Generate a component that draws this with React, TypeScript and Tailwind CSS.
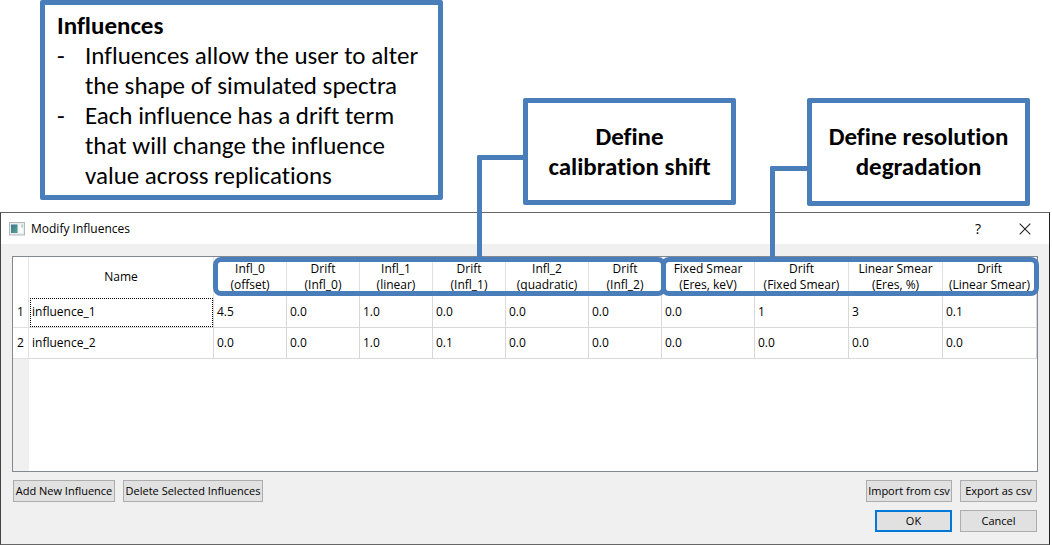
import React from "react";

type Column = { title: string; unit: string; width: string };

const columns: Column[] = [
  { title: "Infl_0", unit: "(offset)", width: "w-[73px]" },
  { title: "Drift", unit: "(Infl_0)", width: "w-[73px]" },
  { title: "Infl_1", unit: "(linear)", width: "w-[73px]" },
  { title: "Drift", unit: "(Infl_1)", width: "w-[73px]" },
  { title: "Infl_2", unit: "(quadratic)", width: "w-[83px]" },
  { title: "Drift", unit: "(Infl_2)", width: "w-[73px]" },
  { title: "Fixed Smear", unit: "(Eres, keV)", width: "w-[93px]" },
  { title: "Drift", unit: "(Fixed Smear)", width: "w-[94px]" },
  { title: "Linear Smear", unit: "(Eres, %)", width: "w-[94px]" },
  { title: "Drift", unit: "(Linear Smear)", width: "w-[94px]" },
];

const rows = [
  { name: "influence_1", values: ["4.5", "0.0", "1.0", "0.0", "0.0", "0.0", "0.0", "1", "3", "0.1"] },
  { name: "influence_2", values: ["0.0", "0.0", "1.0", "0.1", "0.0", "0.0", "0.0", "0.0", "0.0", "0.0"] },
];

const notes = [
  ["Influences allow the user to alter", "the shape of simulated spectra"],
  ["Each influence has a drift term", "that will change the influence", "value across replications"],
];

function DialogButton({ children, className = "", primary = false }: { children: React.ReactNode; className?: string; primary?: boolean }) {
  return (
    <button
      type="button"
      className={`flex h-[22px] items-center justify-center whitespace-nowrap bg-[#e1e1e1] text-[11px] leading-4 ${
        primary ? "border-2 border-[#0078d7]" : "border border-[#adadad]"
      } ${className}`}
    >
      {children}
    </button>
  );
}

function Callouts() {
  return (
    <div className="flex h-[212px] items-start pl-10 pr-[22px] font-['Carlito','Lato',sans-serif] text-[25px] leading-[30px] [font-variant-ligatures:none]">
      <section className="h-[200px] w-[403px] shrink-0 rounded-xs border-5 border-[#4a7ebb] bg-white pl-3 pt-1.5">
        <h2 className="font-bold">Influences</h2>
        <ul>
          {notes.map((lines) => (
            <li key={lines[0]} className="flex">
              <span className="w-7 shrink-0">-</span>
              <span className="whitespace-nowrap">
                {lines.map((line) => (
                  <span key={line} className="block">
                    {line}
                  </span>
                ))}
              </span>
            </li>
          ))}
        </ul>
      </section>
      <section className="relative mt-[98px] ml-auto flex h-[107px] w-[213px] shrink-0 items-center justify-center rounded-xs border-5 border-[#4a7ebb] bg-white text-center font-bold">
        <p className="whitespace-nowrap">
          Define
          <br />
          calibration shift
        </p>
        <div className="absolute right-full top-[52px] z-10 mr-[5px] h-[104px] w-[46px] rounded-tl-xs border-l-5 border-t-5 border-[#4a7ebb]" />
      </section>
      <section className="relative mt-[98px] ml-[71px] flex h-[108px] w-[223px] shrink-0 items-center justify-center rounded-xs border-5 border-[#4a7ebb] bg-white text-center font-bold">
        <p className="whitespace-nowrap">
          Define resolution
          <br />
          degradation
        </p>
        <div className="absolute right-full top-[63px] z-10 mr-[5px] h-[93px] w-[37px] rounded-tl-xs border-l-5 border-t-5 border-[#4a7ebb]" />
      </section>
    </div>
  );
}

function TitleBar() {
  return (
    <header className="flex h-[31px] items-center bg-white pl-2 pr-3.5">
      <svg width="16" height="14" viewBox="0 0 16 14" aria-hidden="true">
        <defs>
          <linearGradient id="pane" x1="0" y1="0" x2="1" y2="1">
            <stop offset="0" stopColor="#3f7596" />
            <stop offset="1" stopColor="#54a587" />
          </linearGradient>
        </defs>
        <rect x="0.5" y="0.5" width="15" height="12.5" fill="#e9edee" stroke="#b3b7ba" />
        <rect x="2" y="2.5" width="6.5" height="8.5" fill="url(#pane)" />
        <rect x="9.5" y="2.5" width="4.5" height="8.5" fill="#f8fafa" />
        <rect x="12.5" y="2.5" width="1.2" height="3" fill="#8fbcb0" />
      </svg>
      <h1 className="ml-1.5">Modify Influences</h1>
      <button type="button" aria-label="Help" className="ml-auto w-5 text-sm">
        ?
      </button>
      <button type="button" aria-label="Close" className="ml-[27px] flex h-5 w-5 items-center justify-center">
        <svg width="12" height="12" viewBox="0 0 12 12" aria-hidden="true">
          <path d="M0.7 0.7 L11.3 11.3 M11.3 0.7 L0.7 11.3" stroke="#222" strokeWidth="1.1" fill="none" />
        </svg>
      </button>
    </header>
  );
}

function InfluenceTable() {
  return (
    <div className="relative flex h-[216px] border border-[#828790] bg-white">
      <div className="absolute bottom-0 left-0 top-[102px] w-4 bg-[#f0f0f0]" />
      <table className="relative w-full table-fixed border-separate border-spacing-0 self-start">
        <colgroup>
          <col className="w-4" />
          <col />
          {columns.map((c) => (
            <col key={c.title + c.unit} className={c.width} />
          ))}
        </colgroup>
        <thead>
          <tr className="h-10">
            <td className="border-r border-[#e5e5e5]" />
            <th className="border-r border-[#e5e5e5] p-0 font-normal">Name</th>
            {columns.map((c) => (
              <th key={c.title + c.unit} className="whitespace-nowrap border-r border-[#e0e0e0] p-0 font-normal leading-4">
                {c.title}
                <br />
                {c.unit}
              </th>
            ))}
          </tr>
        </thead>
        <tbody>
          {rows.map((row, i) => (
            <tr key={row.name} className="h-[31px]">
              <th className="border-b border-r border-[#e0e0e0] bg-white p-0 font-normal">{i + 1}</th>
              <td
                className={`border-b border-r border-[#d8d8d8] p-0 pl-[3px] ${
                  i === 0 ? "outline-1 -outline-offset-2 outline-dotted outline-black" : ""
                }`}
              >
                {row.name}
              </td>
              {row.values.map((value, j) => (
                <td key={j} className="border-b border-r border-[#d8d8d8] p-0 pl-[3px]">
                  {value}
                </td>
              ))}
            </tr>
          ))}
        </tbody>
      </table>
      <div className="pointer-events-none absolute -right-0.5 top-0 flex h-[39px]">
        <div className="-mr-[5px] w-[453px] rounded-lg border-5 border-[#4a7ebb]" />
        <div className="w-[378px] rounded-lg border-5 border-[#4a7ebb]" />
      </div>
    </div>
  );
}

export default function App() {
  return (
    <main className="bg-white text-black">
      <Callouts />
      <div className="mr-0.5 border border-b-[#666] border-l-[#444] border-r-[#222] border-t-[#666] bg-[#f0f0f0] font-['Open_Sans',sans-serif] text-xs">
        <TitleBar />
        <div className="px-[11px] pb-3 pt-3">
          <InfluenceTable />
          <div className="mt-2 flex gap-2 px-px">
            <DialogButton className="w-[102px]">Add New Influence</DialogButton>
            <DialogButton className="w-[140px]">Delete Selected Influences</DialogButton>
            <DialogButton className="ml-auto w-[86px]">Import from csv</DialogButton>
            <DialogButton className="w-[77px]">Export as csv</DialogButton>
          </div>
          <div className="mt-2 flex justify-end gap-2 px-px">
            <DialogButton primary className="w-[77px]">
              OK
            </DialogButton>
            <DialogButton className="w-[77px]">Cancel</DialogButton>
          </div>
        </div>
      </div>
    </main>
  );
}
